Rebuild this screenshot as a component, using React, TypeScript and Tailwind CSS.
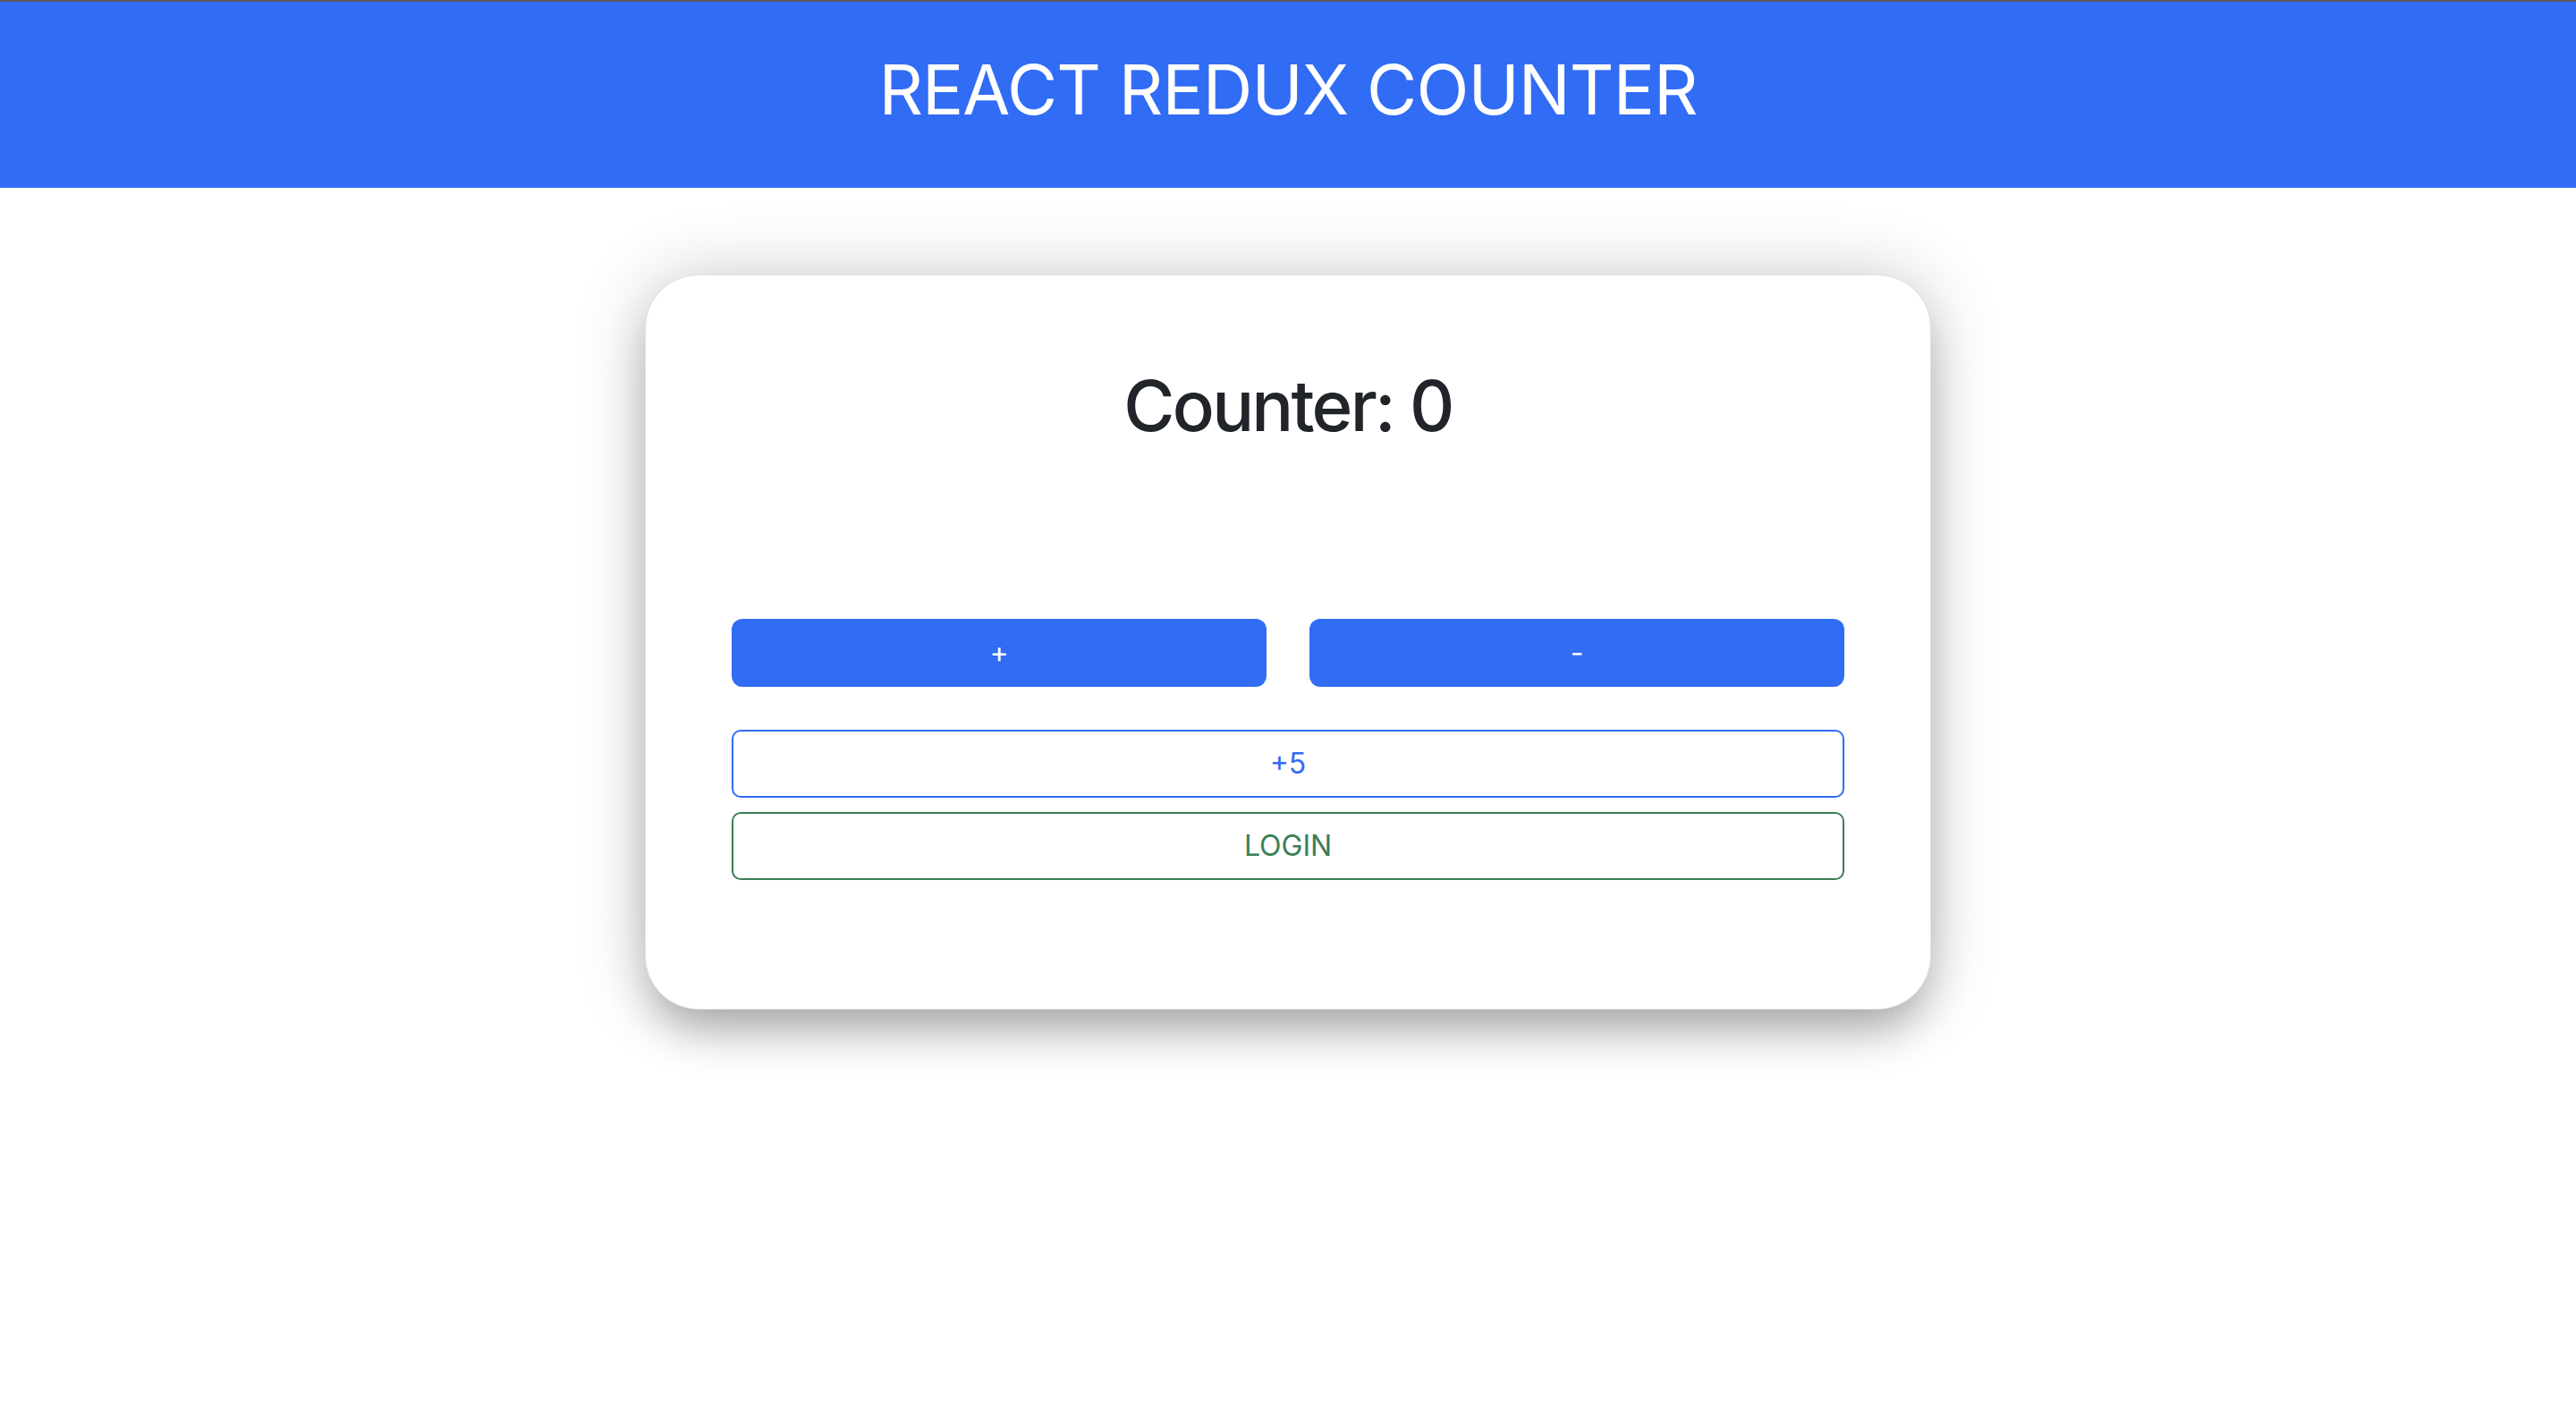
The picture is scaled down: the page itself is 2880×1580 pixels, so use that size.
import { useState } from 'react'

export default function App() {
  const [count, setCount] = useState(0)
  const [loggedIn, setLoggedIn] = useState(false)

  return (
    <div className="min-h-screen bg-white font-['Inter','Liberation_Sans',sans-serif]">
      <header className="h-[210px] border-t-2 border-[#5b5b5b] bg-[#316cf4] flex items-center justify-center pb-3">
        <h1 className="text-white text-[77px] leading-none font-normal tracking-[-0.012em]">REACT REDUX COUNTER</h1>
      </header>

      <main className="flex justify-center pt-[97px]">
        <div className="w-[1438px] h-[822px] rounded-[60px] border border-[#dee2e6] bg-white px-[96px] pt-[98px] shadow-[0_0_80px_rgba(0,0,0,0.2),0_30px_50px_-10px_rgba(0,0,0,0.28)]">
          <h2 className="text-center text-[78px] leading-[96px] text-[#212529] font-medium tracking-[-0.035em]">
            Counter: {count}
          </h2>

          <div className="mt-[190px] grid grid-cols-2 gap-[48px]">
            <button
              onClick={() => setCount(count + 1)}
              className="h-[76px] rounded-[12px] bg-[#316cf4] text-white text-[32px]"
            >
              +
            </button>
            <button
              onClick={() => setCount(count - 1)}
              className="h-[76px] rounded-[12px] bg-[#316cf4] text-white text-[32px]"
            >
              -
            </button>
          </div>

          <button
            onClick={() => setCount(count + 5)}
            className="mt-[48px] w-full h-[76px] rounded-[10px] border-2 border-[#316cf4] text-[#316cf4] text-[32px] bg-white"
          >
            +5
          </button>
          <button
            onClick={() => setLoggedIn(!loggedIn)}
            className="mt-[16px] w-full h-[76px] rounded-[10px] border-2 border-[#3b7e55] text-[#3b7e55] text-[32px] bg-white"
          >
            {loggedIn ? 'LOGOUT' : 'LOGIN'}
          </button>
        </div>
      </main>
    </div>
  )
}
